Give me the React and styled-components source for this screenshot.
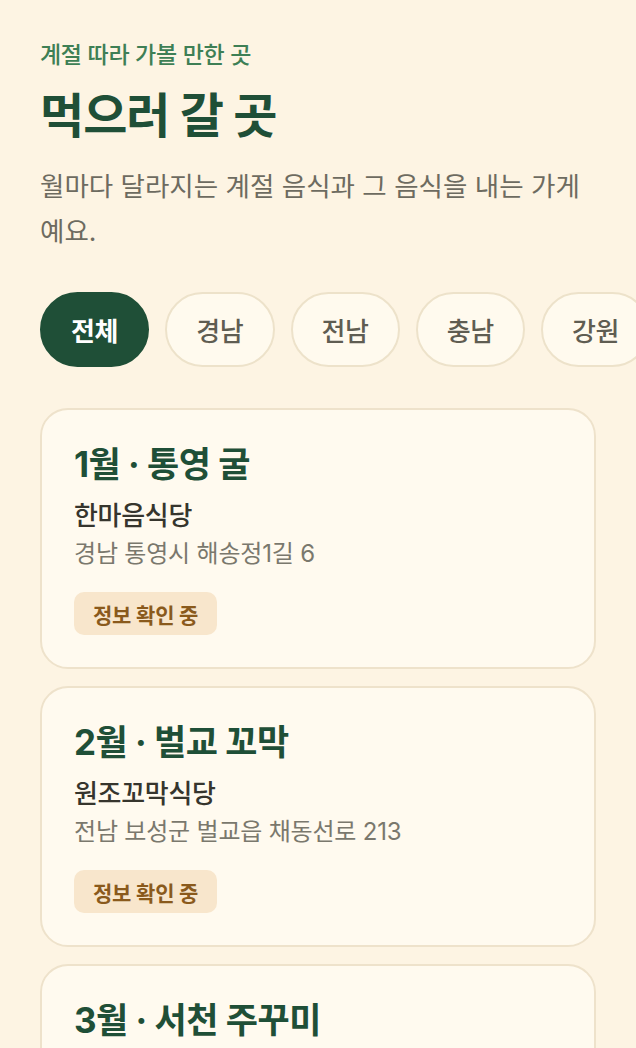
import React from 'react';
import styled, { createGlobalStyle } from 'styled-components';

const GlobalStyle = createGlobalStyle`
  html, body {
    margin: 0;
    padding: 0;
    background: #fdf4e3;
  }
  body {
    font-family: Inter, "Noto Sans CJK KR", sans-serif;
    -webkit-font-smoothing: antialiased;
  }
`;

const regions = ['전체', '경남', '전남', '충남', '강원', '경북'];

const places = [
  { month: '1월', food: '통영 굴', name: '한마음식당', address: '경남 통영시 해송정1길 6' },
  { month: '2월', food: '벌교 꼬막', name: '원조꼬막식당', address: '전남 보성군 벌교읍 채동선로 213' },
  { month: '3월', food: '서천 주꾸미', name: '서천수산식당', address: '충남 서천군 서면 마량리' },
];

const App = () => {
  return (
    <>
      <GlobalStyle />
      <Page>
        <Header>
          <Eyebrow>계절 따라 가볼 만한 곳</Eyebrow>
          <Title>먹으러 갈 곳</Title>
          <Lead>월마다 달라지는 계절 음식과 그 음식을 내는 가게예요.</Lead>
        </Header>
        <Chips>
          {regions.map((r, i) => (
            <Chip key={r} $active={i === 0}>
              {r}
            </Chip>
          ))}
        </Chips>
        <List>
          {places.map((p) => (
            <Card key={p.month}>
              <CardTitle>
                {p.month} · {p.food}
              </CardTitle>
              <Name>{p.name}</Name>
              <Address>{p.address}</Address>
              <Badge>정보 확인 중</Badge>
            </Card>
          ))}
        </List>
      </Page>
    </>
  );
};

export default App;

const Page = styled.main`
  height: 1048px;
  overflow: hidden;
  padding: 39px 40px 0;
  box-sizing: border-box;
`;

const Header = styled.header`
  display: flex;
  flex-direction: column;
`;

const Eyebrow = styled.p`
  margin: 0;
  font-size: 23px;
  line-height: 32px;
  font-weight: 500;
  color: #3e7f55;
  letter-spacing: -0.3px;
`;

const Title = styled.h1`
  margin: 17px 0 0;
  font-size: 48px;
  line-height: 56px;
  font-weight: 700;
  color: #1f4f37;
  letter-spacing: -1px;
`;

const Lead = styled.p`
  margin: 20px 0 0;
  max-width: 550px;
  font-size: 26.5px;
  line-height: 45px;
  color: #6d6b60;
`;

const Chips = styled.div`
  display: flex;
  gap: 16px;
  margin-top: 38px;
  margin-right: -40px;
  overflow: hidden;
`;

const Chip = styled.button`
  flex: none;
  height: 75px;
  padding: 0 29px;
  border-radius: 38px;
  border: 2px solid ${(p) => (p.$active ? '#1f4f37' : '#ede2ca')};
  background: ${(p) => (p.$active ? '#1f4f37' : '#fffaee')};
  color: ${(p) => (p.$active ? '#ffffff' : '#5f5d52')};
  font-family: inherit;
  font-size: 26px;
  font-weight: ${(p) => (p.$active ? 700 : 500)};
  letter-spacing: -0.3px;
`;

const List = styled.div`
  display: flex;
  flex-direction: column;
  gap: 17px;
  margin-top: 41px;
`;

const Card = styled.article`
  display: flex;
  flex-direction: column;
  align-items: flex-start;
  padding: 32px 32px 32px;
  border: 2px solid #eee2cb;
  border-radius: 28px;
  background: #fffaef;
`;

const CardTitle = styled.h2`
  margin: 0;
  font-size: 35px;
  line-height: 44px;
  font-weight: 700;
  color: #1f4f37;
  letter-spacing: -0.5px;
`;

const Name = styled.h3`
  margin: 12px 0 0;
  font-size: 26px;
  line-height: 36px;
  font-weight: 500;
  color: #36352d;
  letter-spacing: -0.3px;
`;

const Address = styled.p`
  margin: 3px 0 0;
  font-size: 24px;
  line-height: 34px;
  color: #7a786d;
  letter-spacing: -0.2px;
`;

const Badge = styled.span`
  margin-top: 21px;
  padding: 0 19px;
  height: 43px;
  display: inline-flex;
  align-items: center;
  border-radius: 10px;
  background: #f8e6cc;
  color: #8a5a1c;
  font-size: 21px;
  font-weight: 700;
  letter-spacing: -0.2px;
`;
